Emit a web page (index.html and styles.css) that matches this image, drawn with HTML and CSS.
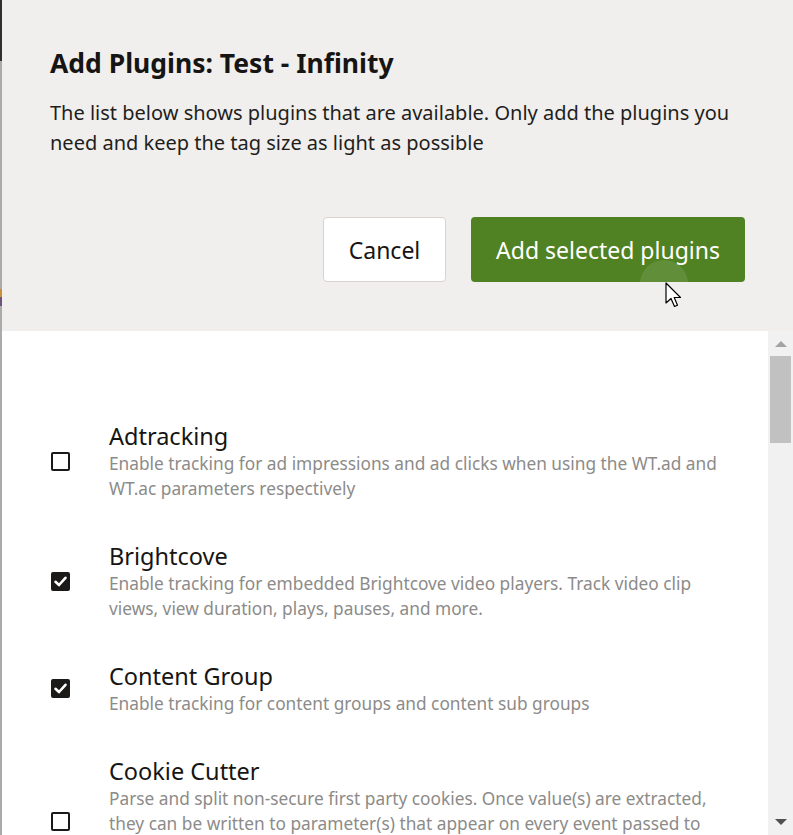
FILE: index.html
```html
<!DOCTYPE html>
<html lang="en">
<head>
<meta charset="utf-8">
<title>Add Plugins</title>
<link rel="stylesheet" href="styles.css">
</head>
<body>
<div class="frame">
  <div class="edge">
    <div class="edge-dark"></div>
    <div class="edge-gray1"></div>
    <div class="edge-orange"></div>
    <div class="edge-purple"></div>
    <div class="edge-gray2"></div>
  </div>
  <div class="dialog">
    <header class="head">
      <h1 class="title">Add Plugins: Test - Infinity</h1>
      <p class="intro">The list below shows plugins that are available. Only add the plugins you need and keep the tag size as light as possible</p>
      <div class="actions">
        <button class="btn btn-cancel">Cancel</button>
        <button class="btn btn-add">Add selected plugins<span class="ripple"></span></button>
      </div>
      <svg class="cursor" width="20" height="28" viewBox="0 0 20 28" aria-hidden="true">
        <path d="M1 1 L1 21 L6 16.5 L9.5 24.5 L12.5 23.2 L9.2 15.5 L15.5 15.5 Z" fill="#fff" stroke="#000" stroke-width="1.2" stroke-linejoin="round"/>
      </svg>
    </header>
    <div class="body">
      <ul class="list">
        <li class="item">
          <span class="check"></span>
          <div class="text">
            <div class="name">Adtracking</div>
            <div class="desc">Enable tracking for ad impressions and ad clicks when using the WT.ad and WT.ac parameters respectively</div>
          </div>
        </li>
        <li class="item">
          <span class="check checked"><svg viewBox="0 0 19 19" width="19" height="19"><path d="M4.5 9.8 L8 13 L14.5 5.8" fill="none" stroke="#fff" stroke-width="2.6" stroke-linecap="round" stroke-linejoin="round"/></svg></span>
          <div class="text">
            <div class="name">Brightcove</div>
            <div class="desc">Enable tracking for embedded Brightcove video players. Track video clip views, view duration, plays, pauses, and more.</div>
          </div>
        </li>
        <li class="item">
          <span class="check checked"><svg viewBox="0 0 19 19" width="19" height="19"><path d="M4.5 9.8 L8 13 L14.5 5.8" fill="none" stroke="#fff" stroke-width="2.6" stroke-linecap="round" stroke-linejoin="round"/></svg></span>
          <div class="text">
            <div class="name">Content Group</div>
            <div class="desc">Enable tracking for content groups and content sub groups</div>
          </div>
        </li>
        <li class="item">
          <span class="check"></span>
          <div class="text">
            <div class="name">Cookie Cutter</div>
            <div class="desc">Parse and split non-secure first party cookies. Once value(s) are extracted, they can be written to parameter(s) that appear on every event passed to the data collection server, making them available for reporting and analysis later on.</div>
          </div>
        </li>
      </ul>
      <div class="scrollbar">
        <span class="arrow-up"></span>
        <span class="thumb"></span>
        <span class="track"></span>
        <span class="arrow-down"></span>
      </div>
    </div>
  </div>
</div>
</body>
</html>
```
FILE: styles.css
```css
html, body {
  margin: 0;
  padding: 0;
  height: 100%;
  overflow: hidden;
}
body {
  font-family: "Noto Sans", "Open Sans", "DejaVu Sans", sans-serif;
  color: #161513;
  background: #f0efed;
}
.frame {
  display: flex;
  height: 835px;
}
.edge {
  width: 2px;
  display: flex;
  flex-direction: column;
  flex-shrink: 0;
}
.edge-dark { height: 61px; background: #2f2f2f; }
.edge-gray1 { height: 228px; background: #ababab; }
.edge-orange { height: 8px; background: #c98f3a; }
.edge-purple { height: 9px; background: #6d5579; }
.edge-gray2 { flex: 1; background: #ababab; }
.dialog {
  flex: 1;
  display: flex;
  flex-direction: column;
  min-width: 0;
}
.head {
  position: relative;
  background: #f0efed;
  padding: 46px 48px 0 48px;
  height: 331px;
  box-sizing: border-box;
}
.title {
  margin: 0;
  font-size: 26.5px;
  font-weight: 700;
  line-height: 34px;
  letter-spacing: 0;
}
.intro {
  margin: 18px 0 0 0;
  font-size: 20px;
  line-height: 30px;
  color: #1f1e1c;
  max-width: 700px;
}
.actions {
  display: flex;
  justify-content: flex-end;
  gap: 25px;
  margin-top: 59px;
}
.btn {
  position: relative;
  overflow: hidden;
  height: 65px;
  font-family: inherit;
  font-size: 23px;
  border-radius: 4px;
  padding: 0;
  cursor: pointer;
}
.btn-cancel {
  width: 123px;
  background: #ffffff;
  color: #161513;
  border: 1px solid #d9d3cd;
}
.btn-add {
  width: 274px;
  background: #508223;
  color: #ffffff;
  border: none;
}
.ripple {
  position: absolute;
  left: 169px;
  top: 43px;
  width: 48px;
  height: 48px;
  border-radius: 50%;
  background: rgba(255, 255, 255, 0.1);
}
.cursor {
  position: absolute;
  left: 663px;
  top: 282px;
}
.body {
  flex: 1;
  display: flex;
  min-height: 0;
  background: #ffffff;
}
.list {
  flex: 1;
  list-style: none;
  margin: 0;
  padding: 90px 43px 0 49px;
  overflow: hidden;
  display: flex;
  flex-direction: column;
  gap: 40px;
}
.item {
  display: flex;
  align-items: center;
  gap: 39px;
}
.check {
  width: 19px;
  height: 19px;
  box-sizing: border-box;
  border: 2px solid #1b1a18;
  border-radius: 2px;
  flex-shrink: 0;
  position: relative;
}
.check.checked {
  background: #1b1a18;
}
.check svg {
  position: absolute;
  left: -2px;
  top: -2px;
}
.text {
  flex: 1;
}
.name {
  font-size: 23.5px;
  line-height: 30px;
  color: #161513;
}
.desc {
  font-size: 17.3px;
  line-height: 25px;
  color: #8c8b89;
}
.scrollbar {
  width: 25px;
  flex-shrink: 0;
  background: #f1f1f1;
  display: flex;
  flex-direction: column;
  align-items: center;
}
.arrow-up {
  margin-top: 10px;
  width: 0;
  height: 0;
  border-left: 6px solid transparent;
  border-right: 6px solid transparent;
  border-bottom: 6px solid #a3a3a3;
}
.thumb {
  margin-top: 9px;
  width: 21px;
  height: 87px;
  background: #c1c1c1;
}
.track { flex: 1; }
.arrow-down {
  margin-bottom: 10px;
  width: 0;
  height: 0;
  border-left: 6px solid transparent;
  border-right: 6px solid transparent;
  border-top: 6px solid #505050;
}
```
